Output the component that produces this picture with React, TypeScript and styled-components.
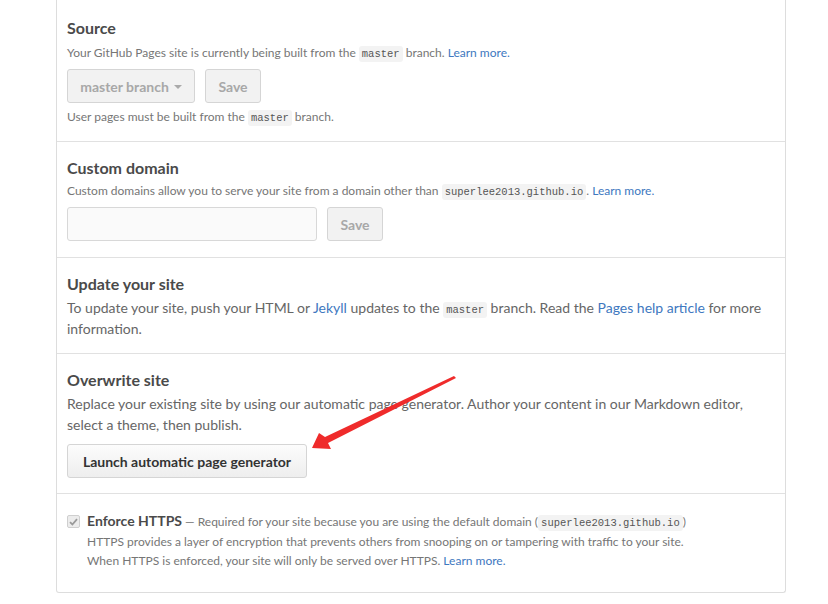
import React from "react";
import styled, { createGlobalStyle } from "styled-components";

const Global = createGlobalStyle`
  html, body { margin: 0; padding: 0; background: #fff; }
  body { font-family: "Lato", "Open Sans", sans-serif; color: #333; }
`;

const Page = styled.div`
  position: relative;
  width: 828px;
  height: 604px;
  overflow: hidden;
`;

const Box = styled.div`
  margin-left: 56px;
  width: 728px;
  border: 1px solid #ddd;
  border-top: none;
  border-radius: 0 0 3px 3px;
`;

const Section = styled.div<{ $top?: number; $bottom?: number }>`
  padding: ${(p) => p.$top ?? 16}px 10px ${(p) => p.$bottom ?? 15}px;
  & + & { border-top: 1px solid #e1e1e1; }
`;

const Heading = styled.h3<{ $mb?: number }>`
  margin: 0 0 ${(p) => p.$mb ?? 4}px;
  font-size: 16px;
  line-height: 20px;
  font-weight: 700;
  color: #4a4a4a;
`;

const Note = styled.p<{ $mt?: number }>`
  margin: ${(p) => p.$mt ?? 0}px 0 0;
  font-size: 12px;
  line-height: 18px;
  color: #767676;
  white-space: nowrap;
`;

const Body = styled.p`
  margin: 0;
  font-size: 14px;
  line-height: 21px;
  color: #666;
  white-space: nowrap;
`;

const Link = styled.a`
  color: #4078c0;
  text-decoration: none;
`;

const Code = styled.code`
  font-family: "Liberation Mono", monospace;
  font-size: 10.5px;
  line-height: 1;
  background: #f3f3f3;
  color: #555;
  padding: 2px 3px;
  border-radius: 3px;
`;

const Row = styled.div<{ $mt?: number }>`
  display: flex;
  gap: 10px;
  margin-top: ${(p) => p.$mt ?? 7}px;
`;

const DisabledBtn = styled.div<{ $w: number }>`
  box-sizing: border-box;
  width: ${(p) => p.$w}px;
  height: 34px;
  display: flex;
  align-items: center;
  justify-content: center;
  gap: 5px;
  border: 1px solid #d5d5d5;
  border-radius: 3px;
  background: #f2f2f2;
  color: #a8a8a8;
  font-size: 14px;
  font-weight: 700;
`;

const Caret = styled.span`
  width: 0;
  height: 0;
  border-left: 4px solid transparent;
  border-right: 4px solid transparent;
  border-top: 4px solid #aaa;
  margin-top: 1px;
`;

const Input = styled.div`
  box-sizing: border-box;
  width: 250px;
  height: 34px;
  border: 1px solid #d8d8d8;
  border-radius: 3px;
  background: #fafafa;
`;

const Button = styled.div`
  box-sizing: border-box;
  margin-top: 9px;
  width: 240px;
  height: 34px;
  display: flex;
  align-items: center;
  justify-content: center;
  border: 1px solid #d5d5d5;
  border-radius: 3px;
  background: linear-gradient(#fcfcfc, #eeeeee);
  color: #333;
  font-size: 14px;
  font-weight: 700;
`;

const CheckRow = styled.div`
  display: flex;
  gap: 7px;
`;

const Check = styled.span`
  box-sizing: border-box;
  flex: none;
  width: 13px;
  height: 13px;
  margin-top: 4px;
  border: 1px solid #cfcfcf;
  border-radius: 2px;
  background: #ececec;
  display: flex;
  align-items: center;
  justify-content: center;
`;

const CheckTitle = styled.div`
  line-height: 20px;
  white-space: nowrap;
  color: #767676;
  font-size: 12px;
`;

const Strong = styled.strong`
  font-size: 14px;
  color: #4a4a4a;
`;

const Lines = styled.div`
  font-size: 12px;
  line-height: 19px;
  color: #767676;
  white-space: nowrap;
`;

const Arrow = styled.svg`
  position: absolute;
  left: 0;
  top: 0;
  pointer-events: none;
`;

export default function App() {
  return (
    <Page>
      <Global />
      <Box>
        <Section $top={18}>
          <Heading $mb={6}>Source</Heading>
          <Note>
            Your GitHub Pages site is currently being built from the <Code>master</Code> branch.{" "}
            <Link>Learn more.</Link>
          </Note>
          <Row>
            <DisabledBtn $w={128}>
              master branch <Caret />
            </DisabledBtn>
            <DisabledBtn $w={56}>Save</DisabledBtn>
          </Row>
          <Note $mt={5}>
            User pages must be built from the <Code>master</Code> branch.
          </Note>
        </Section>
        <Section $bottom={16}>
          <Heading>Custom domain</Heading>
          <Note>
            Custom domains allow you to serve your site from a domain other than{" "}
            <Code>superlee2013.github.io</Code>. <Link>Learn more.</Link>
          </Note>
          <Row>
            <Input />
            <DisabledBtn $w={56}>Save</DisabledBtn>
          </Row>
        </Section>
        <Section $bottom={14}>
          <Heading $mb={3}>Update your site</Heading>
          <Body>
            To update your site, push your HTML or <Link>Jekyll</Link> updates to the{" "}
            <Code>master</Code> branch. Read the <Link>Pages help article</Link> for more
            <br />
            information.
          </Body>
        </Section>
        <Section>
          <Heading $mb={3}>Overwrite site</Heading>
          <Body>
            Replace your existing site by using our automatic page generator. Author your content in
            our Markdown editor,
            <br />
            select a theme, then publish.
          </Body>
          <Button>Launch automatic page generator</Button>
        </Section>
        <Section $top={17} $bottom={22}>
          <CheckRow>
            <Check>
              <svg width="9" height="8" viewBox="0 0 9 8">
                <path d="M1 4.2 L3.4 6.5 L8 1.2" fill="none" stroke="#9a9a9a" strokeWidth="1.8" />
              </svg>
            </Check>
            <div>
              <CheckTitle>
                <Strong>Enforce HTTPS</Strong> — Required for your site because you are using the
                default domain (<Code>superlee2013.github.io</Code>)
              </CheckTitle>
              <Lines>
                HTTPS provides a layer of encryption that prevents others from snooping on or
                tampering with traffic to your site.
                <br />
                When HTTPS is enforced, your site will only be served over HTTPS.{" "}
                <Link>Learn more.</Link>
              </Lines>
            </div>
          </CheckRow>
        </Section>
      </Box>
      <Arrow width="828" height="604" viewBox="0 0 828 604">
        <polygon
          points="312,448 319,433 325,437 454,376 456,378 328,443 331,449"
          fill="#ef2b2b"
        />
      </Arrow>
    </Page>
  );
}
